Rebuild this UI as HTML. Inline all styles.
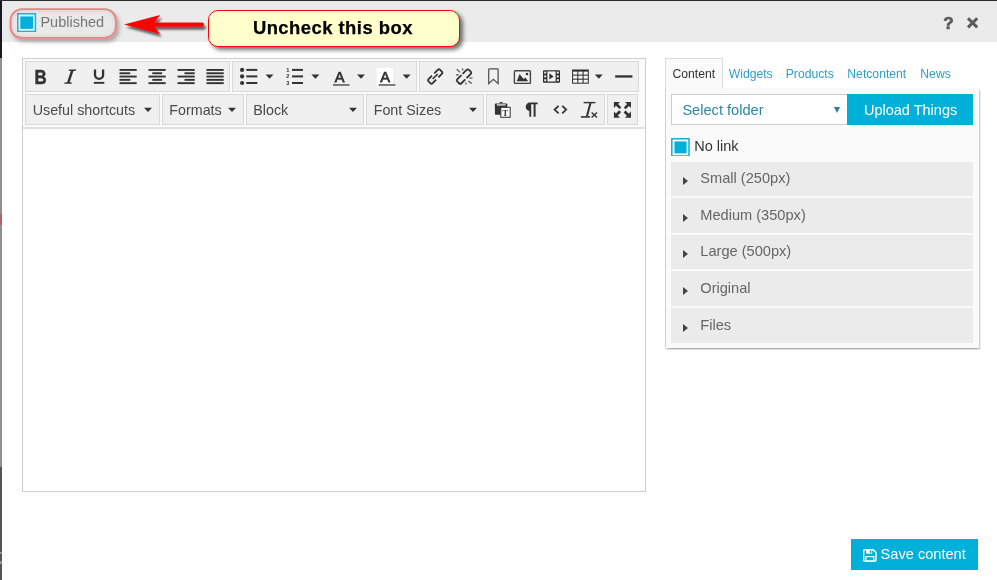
<!DOCTYPE html>
<html><head><meta charset="utf-8"><style>
*{box-sizing:border-box;margin:0;padding:0}
html,body{-webkit-font-smoothing:antialiased;width:997px;height:580px;overflow:hidden;background:#fff;font-family:"Liberation Sans",sans-serif;}
body{position:relative}
.abs{position:absolute}
#topline{left:0;top:0;width:997px;height:1px;background:#2e2e2e}
#leftstrip{left:0;top:0;width:2px;height:580px;background:#8f8f8f}
#leftstrip2{left:0;top:467px;width:2px;height:113px;background:#555}
#leftstrip0{left:0;top:0;width:2px;height:58px;background:#171b20}
#hdr{left:2px;top:1px;width:995px;height:41px;background:#ebebeb}
#pub{left:10px;top:8.5px;width:106.5px;height:30px;border-radius:12px;box-shadow:2px 3px 4px rgba(0,0,0,.3), inset 0 0 6px rgba(0,0,0,.18);background:#e9e9e9}
.cb{width:19px;height:19px;border:1.5px solid #19b4da;background:#fff}
.cb i{position:absolute;left:1.7px;top:1.7px;width:12.6px;height:12.6px;background:#00b0d8;display:block}
#pubcb{left:17px;top:13px}
#pubtx{left:40.4px;top:12.5px;font-size:14.5px;line-height:18px;color:#777}
#callout{left:208px;top:10px;width:252px;height:37px;border:1px solid #f00;border-radius:10px;background:#ffffcc;box-shadow:3px 3px 4px rgba(0,0,0,.55);padding-left:43.9px;font-weight:bold;font-size:18.4px;letter-spacing:.48px;line-height:34.6px;-webkit-text-stroke:.25px #000;white-space:nowrap;color:#000}
#q{left:943.3px;top:13.6px;font-size:17px;font-weight:bold;color:#5a5a5a;line-height:20px;-webkit-text-stroke:.7px #5a5a5a}
#editor{left:22px;top:58px;width:624px;height:434px;border:1px solid #cecece;background:#fff}
#tb{left:23px;top:59px;width:622px;height:70px;background:#fbfbfb;border-bottom:2px solid #e0e0e0}
.grp{position:absolute;height:31px;border:1px solid #d9d9d9;background:#f0f0f0}
.r1{top:61px}.r2{top:94px}
.t{position:absolute;font-size:14.3px;color:#4a4a4a;line-height:18px;white-space:nowrap}
#panel{left:665px;top:88px;width:313.5px;height:260px;border-left:1px solid #d0d0d0;background:#fafafa;box-shadow:1px 1.5px 1.5px rgba(0,0,0,.3)}
#tabc{left:665px;top:58px;width:58px;height:31px;border:1px solid #ddd;border-bottom:none;background:#fafafa}
.tab{position:absolute;top:66.6px;font-size:12.2px;line-height:14px;color:#2f9ec4;white-space:nowrap}
#sel{left:671px;top:94px;width:177px;height:31px;border:1px solid #ccc;background:#fff}
#upl{left:847px;top:94px;width:126px;height:31px;background:#00b0d8;color:#fff;font-size:14.5px;line-height:32.2px;text-align:center;padding-left:1.2px}
.acc{position:absolute;left:671px;width:302px;height:34.6px;background:#ebebeb}
.acc span{position:absolute;left:29.3px;top:7.6px;font-size:14.6px;line-height:18px;color:#666;white-space:nowrap}
.acc b{position:absolute;left:12.2px;top:15.5px;width:0;height:0;border-top:4px solid transparent;border-bottom:4px solid transparent;border-left:5px solid #444}
#save{left:851px;top:539px;width:127px;height:31px;background:#00b0d8;color:#fff;font-size:14.6px;line-height:31px}
#wrap{position:absolute;left:0;top:0;width:997px;height:580px;will-change:transform;transform:translateZ(0)}
</style></head><body><div id="wrap">
<div class="abs" id="hdr"></div>
<div class="abs" id="leftstrip"></div><div class="abs" id="leftstrip2"></div><div class="abs" id="leftstrip0"></div>
<div class="abs" id="topline"></div>
<div class="abs" style="left:0;top:214px;width:2px;height:11px;background:#b8606a"></div><div class="abs" style="left:0;top:552px;width:2px;height:2px;background:#8f9499"></div><div class="abs" style="left:0;top:561px;width:2px;height:3px;background:#8f9499"></div>
<div class="abs" id="pub"></div>
<svg class="abs" style="left:0;top:0" width="130" height="50"><rect x="10.55" y="9.05" width="105.4" height="28.9" rx="11.5" fill="none" stroke="#f07f7f" stroke-width="1.8"/></svg>
<svg class="abs" style="left:17.4px;top:12.9px" width="19.2" height="19.2" viewBox="0 0 19.2 19.2"><rect x=".8" y=".8" width="17.6" height="17.6" fill="#fff" stroke="#19b4da" stroke-width="1.6"/><rect x="3.3" y="3.4" width="12.8" height="12.5" fill="#00b0d8"/></svg>
<div class="abs" id="pubtx">Published</div>
<svg class="abs" id="arrow" style="left:110px;top:0px;overflow:visible" width="110" height="50" viewBox="110 0 110 50">
<defs><filter id="sh" x="-20%" y="-40%" width="140%" height="200%"><feGaussianBlur in="SourceAlpha" stdDeviation="1.3"/><feOffset dx="2" dy="3"/><feComponentTransfer><feFuncA type="linear" slope=".6"/></feComponentTransfer><feMerge><feMergeNode/><feMergeNode in="SourceGraphic"/></feMerge></filter></defs>
<g filter="url(#sh)"><path d="M124 24.4 L160 15 L154.5 22.5 L202 22.5 A2.1 2.1 0 0 1 202 26.7 L154.5 26.7 L160 34 Z" fill="#ff0000"/></g></svg>
<div class="abs" id="callout">Uncheck this box</div>
<div class="abs" id="q">?</div>
<svg class="abs" style="left:965px;top:15px" width="16" height="16" viewBox="0 0 16 16"><path d="M3 3.2 L12.2 12.4 M12.2 3.2 L3 12.4" stroke="#5a5a5a" stroke-width="3"/></svg>

<div class="abs" id="editor"></div>
<div class="abs" id="tb"></div>
<!--GROUPS--><div class="grp r1" style="left:25px;width:205px"></div>
<div class="grp r1" style="left:232px;width:185px"></div>
<div class="grp r1" style="left:419px;width:220px"></div>
<div class="grp r2" style="left:25px;width:135px"></div>
<div class="grp r2" style="left:162px;width:82px"></div>
<div class="grp r2" style="left:246px;width:118px"></div>
<div class="grp r2" style="left:366px;width:118px"></div>
<div class="grp r2" style="left:486px;width:119px"></div>
<div class="grp r2" style="left:607px;width:31px"></div>
<div class="t" style="left:32.7px;top:100.5px">Useful shortcuts</div>
<div class="t" style="left:169.3px;top:100.5px">Formats</div>
<div class="t" style="left:253.3px;top:100.5px">Block</div>
<div class="t" style="left:373.7px;top:100.5px">Font Sizes</div>
<!--/GROUPS-->
<!--ICONS--><svg class="abs" style="left:0;top:0" width="997" height="580" viewBox="0 0 997 580">
<g fill="#333" stroke="none">
<!-- B I U -->
<text transform="translate(34.5 83.6) scale(.86 1)" font-family="Liberation Sans" font-weight="bold" font-size="19.6" stroke="#333" stroke-width=".5" stroke-linejoin="round">B</text>
<path d="M69 69.6 H76.2 L75.9 70.7 L73.4 71 L69.7 82.3 L71.9 82.6 L71.6 83.7 H64.2 L64.5 82.6 L67.1 82.3 L70.8 71 L68.7 70.7 Z"/>
<path d="M95 69.6 V75.1 A4.05 3.7 0 0 0 103.1 75.1 V69.6" fill="none" stroke="#333" stroke-width="2.3"/>
<rect x="93.8" y="81.9" width="10.5" height="1.9"/>
<!-- align left -->
<g id="al"><rect x="119.5" y="69" width="17.2" height="1.9"/><rect x="119.5" y="72.3" width="10.8" height="1.9"/><rect x="119.5" y="75.6" width="17.2" height="1.9"/><rect x="119.5" y="78.9" width="10.8" height="1.9"/><rect x="119.5" y="82.2" width="17.2" height="1.9"/></g>
<g><rect x="148.5" y="69" width="17.2" height="1.9"/><rect x="152.3" y="72.3" width="9.8" height="1.9"/><rect x="148.5" y="75.6" width="17.2" height="1.9"/><rect x="152.3" y="78.9" width="9.8" height="1.9"/><rect x="148.5" y="82.2" width="17.2" height="1.9"/></g>
<g><rect x="177.5" y="69" width="17.2" height="1.9"/><rect x="184.5" y="72.3" width="10.2" height="1.9"/><rect x="177.5" y="75.6" width="17.2" height="1.9"/><rect x="184.5" y="78.9" width="10.2" height="1.9"/><rect x="177.5" y="82.2" width="17.2" height="1.9"/></g>
<g><rect x="206.5" y="69" width="17.2" height="1.9"/><rect x="206.5" y="72.3" width="17.2" height="1.9"/><rect x="206.5" y="75.6" width="17.2" height="1.9"/><rect x="206.5" y="78.9" width="17.2" height="1.9"/><rect x="206.5" y="82.2" width="17.2" height="1.9"/></g>
<!-- bullet list -->
<circle cx="242.1" cy="69.9" r="2.1"/><circle cx="242.1" cy="76.4" r="2.1"/><circle cx="242.1" cy="83" r="2.1"/>
<rect x="246.3" y="68.9" width="11" height="2"/><rect x="246.3" y="75.4" width="11" height="2"/><rect x="246.3" y="82" width="11" height="2"/>
<path d="M265.5 74.6 h8 l-4 4.2 z"/>
<!-- numbered list -->
<rect x="292" y="68.9" width="11" height="2"/><rect x="292" y="75.4" width="11" height="2"/><rect x="292" y="82" width="11" height="2"/>
<g font-family="Liberation Sans" font-weight="bold" font-size="5.6"><text x="286.2" y="72">1</text><text x="286.2" y="78.4">2</text><text x="286.2" y="84.9">3</text></g>
<path d="M311.4 74.6 h8 l-4 4.2 z"/>
<!-- text color -->
<text x="334.8" y="81.6" font-family="Liberation Sans" font-size="14.6" stroke="#333" stroke-width=".75">A</text>
<rect x="333" y="84.1" width="16.5" height="1.7" fill="#666"/>
<path d="M357 74.6 h8 l-4 4.2 z"/>
<rect x="376.8" y="68" width="16.2" height="17.8" fill="#fff"/>
<text x="380.2" y="81.6" font-family="Liberation Sans" font-size="14.6" stroke="#333" stroke-width=".75">A</text>
<rect x="378.7" y="84.1" width="16.7" height="1.7" fill="#666"/>
<path d="M402.6 74.6 h8 l-4 4.2 z"/>
<!-- link -->
<g fill="none" stroke="#333" stroke-width="1.8" stroke-linecap="butt" transform="translate(435.2 76.5) rotate(-45)">
<path d="M1.6 -2.9 H6.5 Q8.2 -2.9 8.2 -1.2 V1.2 Q8.2 2.9 6.5 2.9 H1.6"/>
<path d="M-1.6 -2.9 H-6.5 Q-8.2 -2.9 -8.2 -1.2 V1.2 Q-8.2 2.9 -6.5 2.9 H-1.6"/>
<path d="M-3.6 0 H3.6" stroke-width="1.6"/>
</g>
<!-- unlink -->
<g fill="none" stroke="#333" stroke-width="1.8" stroke-linecap="round" transform="translate(464 76.6) rotate(-45)">
<path d="M1.7 -2.9 H6.5 Q8.2 -2.9 8.2 -1.2 V1.2 Q8.2 2.9 6.5 2.9 H1.4"/>
<path d="M-1.4 -2.9 H-6.5 Q-8.2 -2.9 -8.2 -1.2 V1.2 Q-8.2 2.9 -6.5 2.9 H-1.7"/>
</g>
<g stroke="#555" stroke-width="1.3" fill="none"><path d="M456.6 69.1 L460.1 72.4 M462.6 68.5 V70.6 M455.9 74.9 H458.8 M469.4 78.2 H472.5 M468.3 80.9 L471.7 83.6 M465.9 82.4 V84.4"/></g>
<!-- bookmark -->
<path d="M488.7 83.6 V69.6 Q488.7 68.9 489.4 68.9 H497.4 Q498.1 68.9 498.1 69.6 V83.6 L493.4 79.3 Z" fill="none" stroke="#505050" stroke-width="1.25"/>
<!-- image -->
<rect x="514.4" y="70.8" width="16" height="12.6" rx="1" fill="none" stroke="#444" stroke-width="1.4"/>
<path d="M516.8 81.2 L519.6 74 L523.6 79 L525.4 77.4 L528.1 81.2 Z"/>
<circle cx="527" cy="74" r="1.3"/>
<!-- media -->
<rect x="543" y="70.2" width="17" height="12.5" rx="1" fill="#2c2c2c"/>
<rect x="547.4" y="71.4" width="8.2" height="10.1" fill="#f4f4f4"/>
<g fill="#f0f0f0"><rect x="544.2" y="71.6" width="2" height="2"/><rect x="544.2" y="75.4" width="2" height="2"/><rect x="544.2" y="79.2" width="2" height="2"/><rect x="556.8" y="71.6" width="2" height="2"/><rect x="556.8" y="75.4" width="2" height="2"/><rect x="556.8" y="79.2" width="2" height="2"/></g>
<path d="M549.3 73.2 L553.7 76.4 L549.3 79.6 Z"/>
<!-- table -->
<rect x="572.1" y="69.5" width="16.7" height="14.2" fill="#2c2c2c"/>
<g fill="#f6f6f6"><rect x="573.1" y="71.6" width="4.2" height="3"/><rect x="578.35" y="71.6" width="4.2" height="3"/><rect x="583.6" y="71.6" width="4.2" height="3"/><rect x="573.1" y="75.65" width="4.2" height="3"/><rect x="578.35" y="75.65" width="4.2" height="3"/><rect x="583.6" y="75.65" width="4.2" height="3"/><rect x="573.1" y="79.7" width="4.2" height="3"/><rect x="578.35" y="79.7" width="4.2" height="3"/><rect x="583.6" y="79.7" width="4.2" height="3"/></g>
<path d="M594.8 74.6 h8 l-4 4.2 z"/>
<!-- hr -->
<rect x="615.2" y="75.3" width="17.2" height="2.3"/>
<!-- row2 carets -->
<path d="M144 107.7 h8 l-4 4.2 z"/><path d="M228 107.7 h8 l-4 4.2 z"/><path d="M349 107.7 h8 l-4 4.2 z"/><path d="M469 107.7 h8 l-4 4.2 z"/>
<!-- paste text -->
<path d="M499.2 103.6 A1.95 1.95 0 0 1 503.1 103.6 Z" fill="#555"/>
<rect x="494.9" y="103.5" width="12.4" height="11.2" rx=".8"/>
<rect x="496.8" y="104.2" width="8.8" height="1.4" fill="#ddd"/>
<rect x="500.8" y="107.3" width="9.4" height="10" fill="#fbfbfb" stroke="#333" stroke-width="1"/>
<text x="502.4" y="115.6" font-family="Liberation Serif" font-weight="bold" font-size="8.4">T</text>
<!-- pilcrow -->
<path d="M537.6 102.4 H530 A4.3 4.3 0 0 0 530 111 H529.3 V116.8 H531.2 V104.2 H533.6 V116.8 H535.6 V104.2 H537.6 Z"/>
<!-- code -->
<g fill="none" stroke="#333" stroke-width="1.8"><path d="M558.6 105.8 L554.6 109.6 L558.6 113.4"/><path d="M562.2 105.8 L566.2 109.6 L562.2 113.4"/></g>
<!-- remove format -->
<rect x="583.6" y="101.9" width="11.8" height="1.4"/>
<path d="M589.4 103 H591.5 L588 116.3 H585.9 Z"/>
<rect x="580.9" y="116.1" width="9.2" height="1.6"/>
<path d="M591.6 112.5 L597 117.5 M597 112.5 L591.6 117.5" stroke="#333" stroke-width="1.4" fill="none"/>
<!-- fullscreen -->
<g id="fs"><path d="M613.9 101.9 H620 L618 103.9 L621.3 107.2 L619.4 109.1 L616 105.8 L613.9 108 Z"/>
<path d="M631 101.9 V108 L629 106 L625.7 109.3 L623.8 107.4 L627.1 104 L624.9 101.9 Z"/>
<path d="M613.9 117.7 V111.6 L615.9 113.6 L619.2 110.3 L621.1 112.2 L617.8 115.6 L620 117.7 Z"/>
<path d="M631 117.7 H624.9 L626.9 115.7 L623.6 112.4 L625.5 110.5 L628.9 113.8 L631 111.6 Z"/></g>
</g>
</svg>
<!--/ICONS-->

<div class="abs" id="panel"></div>
<div class="abs" id="tabc"></div>
<div class="tab" style="left:672.5px;color:#333">Content</div>
<div class="tab" style="left:728.7px">Widgets</div>
<div class="tab" style="left:785.7px">Products</div>
<div class="tab" style="left:847.3px">Netcontent</div>
<div class="tab" style="left:920.3px">News</div>
<div class="abs" id="sel"></div>
<div class="abs t" style="left:682.4px;top:100.5px;font-size:14.6px;color:#2b85a6">Select folder</div>
<div class="abs" style="left:834.2px;top:106.5px;width:0;height:0;border-left:3.4px solid transparent;border-right:3.4px solid transparent;border-top:6.2px solid #2b7f9e"></div>
<div class="abs" id="upl">Upload Things</div>
<svg class="abs" style="left:671.1px;top:137.6px" width="18.8" height="18.8" viewBox="0 0 18.8 18.8"><rect x=".8" y=".8" width="17.2" height="17.2" fill="#fff" stroke="#19b4da" stroke-width="1.6"/><rect x="3.5" y="3.4" width="12.1" height="12" fill="#00b0d8"/></svg>
<div class="abs t" style="left:694.2px;top:137.4px;font-size:14.5px;color:#333">No link</div>
<div class="acc" style="top:161.8px"><b></b><span>Small (250px)</span></div>
<div class="acc" style="top:198.4px"><b></b><span>Medium (350px)</span></div>
<div class="acc" style="top:234.9px"><b></b><span>Large (500px)</span></div>
<div class="acc" style="top:271.4px"><b></b><span>Original</span></div>
<div class="acc" style="top:308px"><b></b><span>Files</span></div>

<div class="abs" id="save"><span style="position:absolute;left:29.6px;top:.3px">Save content</span>
<svg style="position:absolute;left:12px;top:10px" width="14" height="13" viewBox="0 0 14 13"><path d="M0.7 1.5 Q0.7 0.7 1.5 0.7 L10.2 0.7 L13 3.5 L13 11.3 Q13 12.1 12.2 12.1 L1.5 12.1 Q0.7 12.1 0.7 11.3 Z" fill="none" stroke="#fff" stroke-width="1.4"/><rect x="3.2" y="0.7" width="6" height="4" fill="#fff"/><rect x="6.7" y="1.3" width="1.6" height="2.6" fill="#00b0d8"/><rect x="3" y="7.6" width="7.8" height="4.5" fill="none" stroke="#fff" stroke-width="1.2"/></svg></div>
</div></body></html>
